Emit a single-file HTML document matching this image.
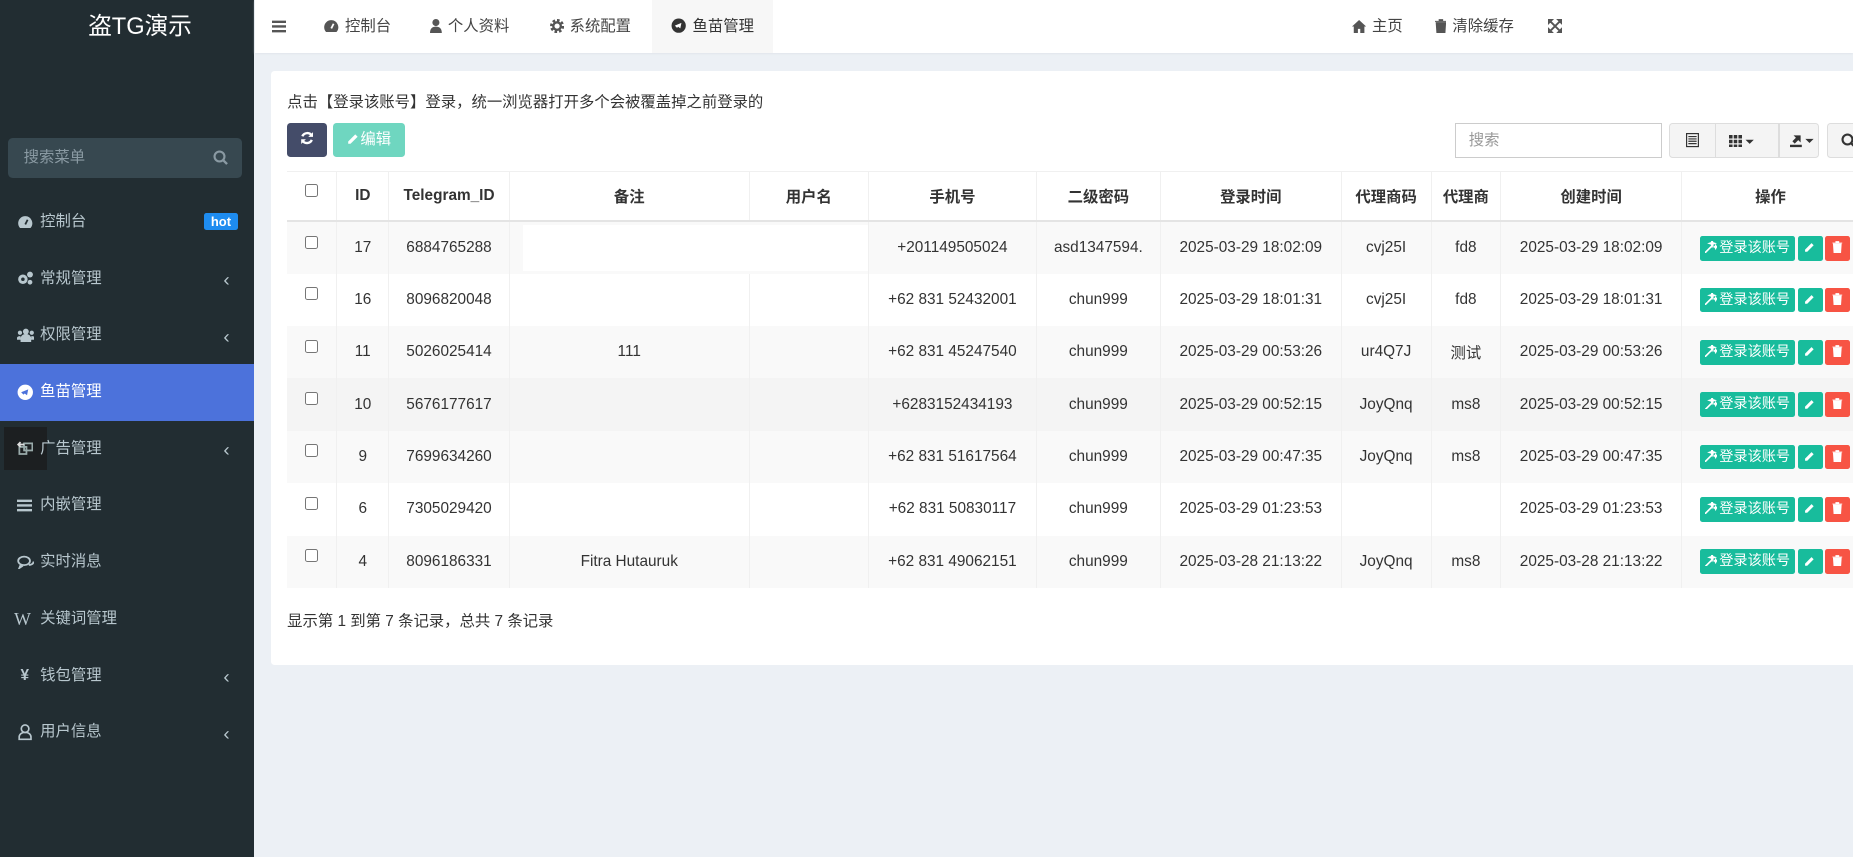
<!DOCTYPE html>
<html><head><meta charset="utf-8">
<style>
html{zoom:1.18176}
*{box-sizing:border-box;margin:0;padding:0}
body{width:1568px;height:725px;overflow:hidden;background:#ecf0f5;font-family:"Liberation Sans","Noto Sans CJK SC",sans-serif;font-size:13px;color:#333;position:relative}
.sb{position:absolute;left:0;top:0;width:215px;height:725px;background:#222d32}
.logo{position:absolute;left:0;top:1px;width:215px;height:45px;text-align:center;line-height:44px;color:#fff;font-size:20px;padding-left:22px}
.ss{position:absolute;left:7px;top:117px;width:198px;height:34px;background:#374850;border-radius:4px;color:#8a9aa3;line-height:34px;padding-left:13px}
.ss svg{position:absolute;right:12px;top:10px}
.mi{position:absolute;left:0;width:215px;height:48px;line-height:48px;color:#b8c7ce;padding-left:34px}
.mi .ic{position:absolute;left:14px;top:0;width:14px;text-align:center}
.mi .ic svg{vertical-align:middle}
.mi .ar{position:absolute;left:189px;top:2px;font-size:16px}
.mi.act{background:#4c72db;color:#fff}
.hot{position:absolute;left:173px;top:16px;width:28px;height:15px;background:#1e8cf0;color:#fff;font-size:11px;font-weight:bold;line-height:15px;text-align:center;border-radius:2px}
.hd{position:absolute;left:216px;top:0;width:1352px;height:45px;background:#fff;box-shadow:0 1px 2px #dde2e8}
.hi{position:absolute;top:0;height:45px;line-height:45px;color:#444;font-size:13px}
.hi svg{vertical-align:-2px;margin-right:5px}
.card{position:absolute;left:229px;top:60px;width:1400px;height:503px;background:#fff;border-radius:3px}
.note{position:absolute;left:14px;top:16px}
.btn{position:absolute;top:44px;height:29px;border-radius:3px;color:#fff;text-align:center;line-height:29px}
.tb{position:absolute;left:14px;top:85px;border-collapse:collapse;table-layout:fixed;width:1370px}
.tb th,.tb td{text-align:center;vertical-align:middle;border-left:1px solid #f0f0f0;white-space:nowrap;overflow:hidden}
.tb th:first-child,.tb td:first-child{border-left:none}
.tb th{height:42px;font-weight:bold;border-bottom:2px solid #e4e4e4;border-top:1px solid #f0f0f0}
.tb td{height:44.3px}
.tb tr.o td{background:#f9f9f9}
.tb tr.h td{background:#f4f4f4}
.cb{display:inline-block;width:11px;height:11px;border:1px solid #767676;border-radius:2px;background:#fff;position:relative;top:-3px}
.ob{display:inline-block;height:21px;line-height:21px;border-radius:2px;color:#fff;font-size:12px;vertical-align:middle;margin-right:2px;text-align:center}
.g{background:#18bc9c}.r{background:#f75444}
.bg{position:absolute;top:44px;height:30px;border:1px solid #ddd;background:#f4f4f4;border-radius:3px}
</style></head><body>
<div class="sb">
<div class="logo">盗TG演示</div>
<div class="ss">搜索菜单<svg width="13" height="13" viewBox="0 0 13 13"><circle cx="5.5" cy="5.5" r="4.2" fill="none" stroke="#8a9aa3" stroke-width="1.8"/><path d="M8.6 8.6l3.3 3.3" stroke="#8a9aa3" stroke-width="2"/></svg></div>

<div class="mi" style="top:164px"><span class="ic"><svg width="14" height="12" viewBox="0 0 14 12"><path d="M7 1a6 6 0 0 0-6 6c0 1.6.6 3 1.6 4h8.8A6 6 0 0 0 7 1z" fill="#b8c7ce"/><path d="M7 8l2-4" stroke="#222d32" stroke-width="1.5"/></svg></span>控制台<span class="hot">hot</span></div>
<div class="mi" style="top:212px"><span class="ic"><svg width="14" height="12" viewBox="0 0 14 12"><circle cx="5" cy="7" r="4" fill="#b8c7ce"/><circle cx="5" cy="7" r="1.5" fill="#222d32"/><circle cx="11" cy="3" r="2.5" fill="#b8c7ce"/><circle cx="11" cy="9.5" r="2" fill="#b8c7ce"/></svg></span>常规管理<span class="ar">&#8249;</span></div>
<div class="mi" style="top:260px"><span class="ic"><svg width="15" height="12" viewBox="0 0 15 12"><circle cx="7.5" cy="3" r="2.5" fill="#b8c7ce"/><circle cx="2.5" cy="4" r="1.8" fill="#b8c7ce"/><circle cx="12.5" cy="4" r="1.8" fill="#b8c7ce"/><path d="M3 12v-3a4.5 4 0 0 1 9 0v3z M0 10v-2a2.5 2 0 0 1 3-1v3z M15 10v-2a2.5 2 0 0 0-3-1v3z" fill="#b8c7ce"/></svg></span>权限管理<span class="ar">&#8249;</span></div>
<div class="mi act" style="top:308px"><span class="ic"><svg width="14" height="14" viewBox="0 0 14 14"><circle cx="7" cy="7" r="6.5" fill="#fff"/><path d="M3.5 7l6-2.5-1 5-2-1.5-1 1z" fill="#4c72db"/></svg></span>鱼苗管理</div>
<div style="position:absolute;left:3px;top:361px;width:37px;height:37px;background:#1c1f21"></div>
<div class="mi" style="top:356px"><span class="ic"><svg width="14" height="13" viewBox="0 0 14 13"><rect x="2" y="5" width="6" height="6" fill="none" stroke="#9aa" stroke-width="1.5"/><rect x="6" y="2" width="7" height="6" fill="none" stroke="#9aa" stroke-width="1.5"/><path d="M6 3H1M3 1L1 3l2 2" stroke="#ddd" stroke-width="1.5" fill="none"/></svg></span>广告管理<span class="ar">&#8249;</span></div>
<div class="mi" style="top:404px"><span class="ic"><svg width="13" height="11" viewBox="0 0 13 11"><path d="M0 1.5h13M0 5.5h13M0 9.5h13" stroke="#b8c7ce" stroke-width="2"/></svg></span>内嵌管理</div>
<div class="mi" style="top:452px"><span class="ic"><svg width="15" height="12" viewBox="0 0 15 12"><ellipse cx="6" cy="5" rx="5" ry="3.6" fill="none" stroke="#b8c7ce" stroke-width="1.5"/><path d="M10 8.5c2 0 4-1 4-3M3 8.5l-1 2.5 3-2" stroke="#b8c7ce" stroke-width="1.5" fill="none"/></svg></span>实时消息</div>
<div class="mi" style="top:500px"><span class="ic" style="font-family:'Liberation Serif',serif;font-size:15px;left:12px">W</span><span style="margin-left:0px">关键词管理</span></div>
<div class="mi" style="top:548px"><span class="ic" style="font-weight:bold">¥</span>钱包管理<span class="ar">&#8249;</span></div>
<div class="mi" style="top:596px"><span class="ic"><svg width="12" height="14" viewBox="0 0 12 14"><circle cx="6" cy="4" r="3.2" fill="none" stroke="#b8c7ce" stroke-width="1.4"/><path d="M1 13v-2a5 4 0 0 1 10 0v2z" fill="none" stroke="#b8c7ce" stroke-width="1.4"/></svg></span>用户信息<span class="ar">&#8249;</span></div>
</div>

<div class="hd">
<div class="hi" style="left:14px"><svg width="12" height="11" viewBox="0 0 12 11"><path d="M0 1.5h12M0 5.5h12M0 9.5h12" stroke="#555" stroke-width="2"/></svg></div>
<div class="hi" style="left:57px"><svg width="14" height="12" viewBox="0 0 14 12"><path d="M7 1a6 6 0 0 0-6 6c0 1.6.6 3 1.6 4h8.8A6 6 0 0 0 7 1z" fill="#555"/><path d="M7 8l2-4" stroke="#fff" stroke-width="1.5"/></svg>控制台</div>
<div class="hi" style="left:148px"><svg width="10" height="12" viewBox="0 0 10 12"><circle cx="5" cy="3" r="3" fill="#555"/><path d="M0 12c0-4 2-5.5 5-5.5s5 1.5 5 5.5z" fill="#555"/></svg>个人资料</div>
<div class="hi" style="left:249px"><svg width="12" height="12" viewBox="0 0 12 12"><circle cx="6" cy="6" r="4.5" fill="none" stroke="#555" stroke-width="3" stroke-dasharray="2 1.5"/><circle cx="6" cy="6" r="3.2" fill="none" stroke="#555" stroke-width="2"/></svg>系统配置</div>
<div class="hi" style="left:336px;width:102px;background:#f7f7f7;padding-left:16px;color:#333"><svg width="13" height="13" viewBox="0 0 14 14"><circle cx="7" cy="7" r="6.5" fill="#333"/><path d="M3.5 7l6-2.5-1 5-2-1.5-1 1z" fill="#fff"/></svg>鱼苗管理</div>
<div class="hi" style="left:928px"><svg width="12" height="11" viewBox="0 0 12 11"><path d="M6 0L0 5.5h1.5V11h3.5V7.5h2V11h3.5V5.5H12z" fill="#555"/></svg>主页</div>
<div class="hi" style="left:998px"><svg width="10" height="12" viewBox="0 0 10 12"><path d="M0 2h10M3.5 2V0.5h3V2M1 3h8l-.6 9H1.6z" fill="#555" stroke="#555" stroke-width=".8"/></svg>清除缓存</div>
<div class="hi" style="left:1094px"><svg width="12" height="12" viewBox="0 0 12 12"><path d="M0 0h4L0 4zM12 0v4L8 0zM0 12V8l4 4zM12 12H8l4-4zM1.5 1.5l9 9M10.5 1.5l-9 9" fill="#555" stroke="#555" stroke-width="1.6"/></svg></div>
</div>

<div class="card">
<div class="note">点击【登录该账号】登录，统一浏览器打开多个会被覆盖掉之前登录的</div>
<div class="btn" style="left:14px;width:34px;background:#444c69"><svg width="12" height="12" viewBox="0 0 12 12" style="vertical-align:-1px"><path d="M10 4A4.5 4.5 0 0 0 2 4.5M2 8a4.5 4.5 0 0 0 8-.5" stroke="#fff" stroke-width="2" fill="none"/><path d="M11 1v4H7zM1 11V7h4z" fill="#fff"/></svg></div>
<div class="btn" style="left:53px;width:61px;background:#6fd6c0"><svg width="11" height="11" viewBox="0 0 11 11" style="vertical-align:-1px"><path d="M1 8l6-6 2 2-6 6H1z" fill="#fff"/></svg>编辑</div>
<div style="position:absolute;left:1002px;top:44px;width:175px;height:30px;border:1px solid #ccc;color:#999;line-height:28px;padding-left:11px">搜索</div>
<div class="bg" style="left:1183px;width:127px">
 <div style="position:absolute;left:38px;top:0;width:1px;height:28px;background:#ddd"></div>
 <div style="position:absolute;left:92px;top:0;width:1px;height:28px;background:#ddd"></div>
 <svg style="position:absolute;left:14px;top:8px" width="11" height="12" viewBox="0 0 11 12"><rect x=".5" y=".5" width="10" height="11" fill="none" stroke="#333"/><path d="M2 3h7M2 5h7M2 7h7M2 9h7" stroke="#333"/></svg>
 <svg style="position:absolute;left:50px;top:9px" width="22" height="11" viewBox="0 0 22 11"><path d="M0 0h3v3H0zM4 0h3v3H4zM8 0h3v3H8zM0 4h3v3H0zM4 4h3v3H4zM8 4h3v3H8zM0 8h3v3H0zM4 8h3v3H4zM8 8h3v3H8zM14 4h7l-3.5 3.5z" fill="#333"/></svg>
 <svg style="position:absolute;left:102px;top:8px" width="22" height="12" viewBox="0 0 22 12"><path d="M0 10h10v2H0zM3 2h6v6l-2-2-3 3-2-2 3-3z" fill="#333"/><path d="M13 5h7l-3.5 3.5z" fill="#333"/></svg>
</div>
<div class="bg" style="left:1317px;width:60px"><svg style="position:absolute;left:11px;top:8px" width="13" height="13" viewBox="0 0 13 13"><circle cx="5.5" cy="5.5" r="4.2" fill="none" stroke="#333" stroke-width="1.8"/><path d="M8.6 8.6l3.3 3.3" stroke="#333" stroke-width="2"/></svg></div>

<table class="tb">
<colgroup><col style="width:42px"><col style="width:44px"><col style="width:102px"><col style="width:203px"><col style="width:101px"><col style="width:142px"><col style="width:105px"><col style="width:153px"><col style="width:76px"><col style="width:59px"><col style="width:153px"><col style="width:190px"></colgroup>
<tr><th><span class="cb"></span></th><th>ID</th><th>Telegram_ID</th><th>备注</th><th>用户名</th><th>手机号</th><th>二级密码</th><th>登录时间</th><th>代理商码</th><th>代理商</th><th>创建时间</th><th style="padding-right:40px">操作</th></tr>
<tr class="o"><td><span class="cb"></span></td><td>17</td><td>6884765288</td><td colspan="2" style="padding:2px 0 2px 11px"><div style="background:#fff;height:39px"></div></td><td>+201149505024</td><td>asd1347594.</td><td>2025-03-29 18:02:09</td><td>cvj25I</td><td>fd8</td><td>2025-03-29 18:02:09</td><td class="ops"></td></tr>
<tr><td><span class="cb"></span></td><td>16</td><td>8096820048</td><td></td><td></td><td>+62 831 52432001</td><td>chun999</td><td>2025-03-29 18:01:31</td><td>cvj25I</td><td>fd8</td><td>2025-03-29 18:01:31</td><td class="ops"></td></tr>
<tr class="o"><td><span class="cb"></span></td><td>11</td><td>5026025414</td><td>111</td><td></td><td>+62 831 45247540</td><td>chun999</td><td>2025-03-29 00:53:26</td><td>ur4Q7J</td><td>测试</td><td>2025-03-29 00:53:26</td><td class="ops"></td></tr>
<tr class="h"><td><span class="cb"></span></td><td>10</td><td>5676177617</td><td></td><td></td><td>+6283152434193</td><td>chun999</td><td>2025-03-29 00:52:15</td><td>JoyQnq</td><td>ms8</td><td>2025-03-29 00:52:15</td><td class="ops"></td></tr>
<tr class="o"><td><span class="cb"></span></td><td>9</td><td>7699634260</td><td></td><td></td><td>+62 831 51617564</td><td>chun999</td><td>2025-03-29 00:47:35</td><td>JoyQnq</td><td>ms8</td><td>2025-03-29 00:47:35</td><td class="ops"></td></tr>
<tr><td><span class="cb"></span></td><td>6</td><td>7305029420</td><td></td><td></td><td>+62 831 50830117</td><td>chun999</td><td>2025-03-29 01:23:53</td><td></td><td></td><td>2025-03-29 01:23:53</td><td class="ops"></td></tr>
<tr class="o"><td><span class="cb"></span></td><td>4</td><td>8096186331</td><td>Fitra Hutauruk</td><td></td><td>+62 831 49062151</td><td>chun999</td><td>2025-03-28 21:13:22</td><td>JoyQnq</td><td>ms8</td><td>2025-03-28 21:13:22</td><td class="ops"></td></tr>
</table>
<div style="position:absolute;left:14px;top:455px">显示第 1 到第 7 条记录，总共 7 条记录</div>
</div>
<script>
document.querySelectorAll('td.ops').forEach(function(t){
t.style.textAlign='left';t.style.paddingLeft='15px';
t.innerHTML='<span class="ob g" style="width:81px"><svg width="10" height="10" viewBox="0 0 10 10" style="vertical-align:-1px;margin-right:2px"><path d="M0 10L7 3M6 0l.5 1.5L8 2l-1.5.5L6 4 5.5 2.5 4 2l1.5-.5zM9 4l.3.7.7.3-.7.3L9 6l-.3-.7L8 5l.7-.3z" stroke="#fff" stroke-width="1.4" fill="#fff"/></svg>登录该账号</span><span class="ob g" style="width:21px"><svg width="10" height="10" viewBox="0 0 11 11" style="vertical-align:-1px"><path d="M1 8l6-6 2 2-6 6H1z" fill="#fff"/></svg></span><span class="ob r" style="width:21px"><svg width="9" height="10" viewBox="0 0 10 12" style="vertical-align:-1px"><path d="M0 2h10M3.5 2V0.5h3V2M1 3h8l-.6 9H1.6z" fill="#fff" stroke="#fff" stroke-width=".8"/></svg></span>';
});
</script>
</body></html>
